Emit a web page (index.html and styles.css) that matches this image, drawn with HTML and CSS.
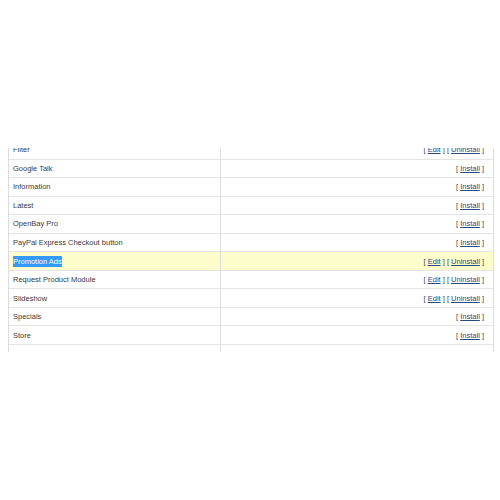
FILE: index.html
```html
<!DOCTYPE html>
<html>
<head>
  <meta charset="utf-8">
  <title>Modules</title>
  <link rel="stylesheet" href="styles.css">
</head>
<body>
<div class="Viewport">
  <div class="ModuleList">
    <div class="Row"><div class="Name">Filter</div><div class="Action">[ <a href="#">Edit</a> ] [ <a href="#">Uninstall</a> ]</div></div>
    <div class="Row"><div class="Name">Google Talk</div><div class="Action">[ <a href="#">Install</a> ]</div></div>
    <div class="Row"><div class="Name">Information</div><div class="Action">[ <a href="#">Install</a> ]</div></div>
    <div class="Row"><div class="Name">Latest</div><div class="Action">[ <a href="#">Install</a> ]</div></div>
    <div class="Row"><div class="Name">OpenBay Pro</div><div class="Action">[ <a href="#">Install</a> ]</div></div>
    <div class="Row"><div class="Name">PayPal Express Checkout button</div><div class="Action">[ <a href="#">Install</a> ]</div></div>
    <div class="Row Row--active"><div class="Name"><span class="Selected">Promotion Ads</span></div><div class="Action">[ <a href="#">Edit</a> ] [ <a href="#">Uninstall</a> ]</div></div>
    <div class="Row"><div class="Name">Request Product Module</div><div class="Action">[ <a href="#">Edit</a> ] [ <a href="#">Uninstall</a> ]</div></div>
    <div class="Row"><div class="Name">Slideshow</div><div class="Action">[ <a href="#">Edit</a> ] [ <a href="#">Uninstall</a> ]</div></div>
    <div class="Row"><div class="Name">Specials</div><div class="Action">[ <a href="#">Install</a> ]</div></div>
    <div class="Row"><div class="Name">Store</div><div class="Action">[ <a href="#">Install</a> ]</div></div>
    <div class="Row"><div class="Name">&nbsp;</div><div class="Action">&nbsp;</div></div>
  </div>
</div>
</body>
</html>
```

FILE: styles.css
```css
body {
  margin: 0;
  background: #fff;
  font-family: "Liberation Sans", Arial, sans-serif;
  font-size: 7.5px;
  color: #3a3a3a;
}
.Viewport {
  width: 486px;
  height: 204px;
  margin: 148px 0 0 8px;
  overflow: hidden;
}
.ModuleList {
  margin-top: -7px;
  border-left: 1px solid #dcdcdc;
  border-right: 1px solid #dcdcdc;
}
.Row {
  box-sizing: border-box;
  display: grid;
  grid-template-columns: 212px 1fr;
  height: 18.55px;
  border-bottom: 1px solid #e4e4e4;
}
.Row--active {
  background-color: #fdfdcc;
}
.Name {
  display: flex;
  align-items: center;
  padding-left: 4px;
  border-right: 1px solid #dcdcdc;
  white-space: nowrap;
}
.Action {
  display: flex;
  align-items: center;
  justify-content: flex-end;
  padding-right: 9px;
  white-space: pre;
  color: #444;
}
.Action a {
  color: #2a4a80;
  text-decoration: underline;
}
.Selected {
  background-color: #3399ff;
  color: #fff;
  padding: 1px 0;
}
```
